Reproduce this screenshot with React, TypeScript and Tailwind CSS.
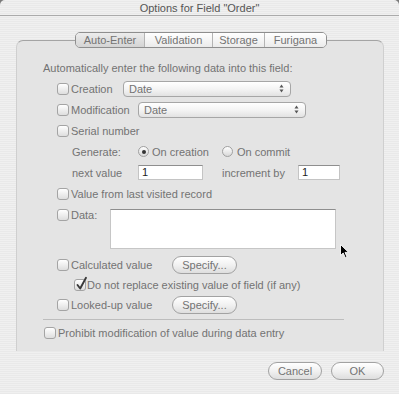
import React from 'react';

const Check: React.FC<{ checked?: boolean }> = ({ checked = false }) => (
  <span className="relative inline-block w-[12px] h-[12px] shrink-0 rounded-[3px] border border-[#a4a4a4] bg-linear-to-b from-[#ffffff] to-[#dedede]">
    {checked && (
      <svg className="absolute left-[1px] -top-[3px] overflow-visible" width="12" height="14" viewBox="0 0 12 14">
        <path d="M1.5 8 L4.2 11.5 L10 0.8" fill="none" stroke="#3a3a3a" strokeWidth="1.9" strokeLinecap="round" strokeLinejoin="round" />
      </svg>
    )}
  </span>
);

const Radio: React.FC<{ selected?: boolean }> = ({ selected = false }) => (
  <span className="inline-flex items-center justify-center w-[11px] h-[11px] shrink-0 rounded-full border border-[#a0a0a0] bg-linear-to-b from-[#ffffff] to-[#d8d8d8]">
    {selected && <span className="block w-[4px] h-[4px] rounded-full bg-[#333333]" />}
  </span>
);

const Popup: React.FC<{ value: string; width: string }> = ({ value, width }) => (
  <div className={`${width} h-[16px] flex items-center justify-between rounded-[4px] border border-[#a6a6a6] bg-linear-to-b from-[#ffffff] via-[#f4f4f4] to-[#e2e2e2] pl-[5px] pr-[6px]`}>
    <span className="leading-[14px]">{value}</span>
    <svg width="5" height="9" viewBox="0 0 5 9">
      <path d="M2.5 0.5 L4.5 3.5 L0.5 3.5 Z" fill="#555" />
      <path d="M0.5 5.5 L4.5 5.5 L2.5 8.5 Z" fill="#555" />
    </svg>
  </div>
);

const Field: React.FC<{ value: string; width: string }> = ({ value, width }) => (
  <div className={`${width} h-[15px] flex items-center bg-white border border-[#c4c4c4] border-t-[#8e8e8e] pl-[3px] text-[#222] leading-[13px]`}>
    {value}
  </div>
);

const Pill: React.FC<{ label: string; width: string }> = ({ label, width }) => (
  <div className={`${width} h-[18px] flex items-center justify-center rounded-full border border-[#a2a2a2] bg-linear-to-b from-[#ffffff] via-[#f1f1f1] to-[#dedede] leading-[14px]`}>
    {label}
  </div>
);

const tabs = [
  { label: 'Auto-Enter', width: 'w-[68px]', active: true },
  { label: 'Validation', width: 'w-[68px]', active: false },
  { label: 'Storage', width: 'w-[52px]', active: false },
  { label: 'Furigana', width: 'flex-1', active: false },
];

export default function App() {
  return (
    <div className="relative w-[399px] h-[394px] overflow-hidden bg-[#7a7a7a] font-['Lucida_Grande','Liberation_Sans',sans-serif] text-[11px] text-[#737373]">
      <div className="h-full flex flex-col rounded-t-[5px] bg-[repeating-linear-gradient(180deg,#f0f0f0_0px,#f0f0f0_1px,#e9e9e9_1px,#e9e9e9_2px)]">
        {/* Title bar */}
        <div className="h-[16px] shrink-0 flex items-center justify-center border-b border-[#ababab] text-[#555] leading-[14px]">
          Options for Field &quot;Order&quot;
        </div>

        {/* Tabs */}
        <div className="relative z-10 mt-[16px] ml-[75px] w-[252px] h-[16px] flex rounded-[5px] border border-[#8e8e8e] overflow-hidden">
          {tabs.map((t, i) => (
            <div
              key={t.label}
              className={`${t.width} h-full flex items-center justify-center leading-[14px] ${i > 0 ? 'border-l border-[#b4b4b4]' : ''} ${
                t.active ? 'bg-linear-to-b from-[#ececec] to-[#d4d4d4]' : 'bg-linear-to-b from-[#ffffff] to-[#ebebeb]'
              }`}
            >
              {t.label}
            </div>
          ))}
        </div>

        {/* Panel */}
        <div className="-mt-[8px] ml-[16px] w-[368px] h-[311px] shrink-0 flex flex-col rounded-t-[7px] border-t border-x border-[#a4a4a4] border-x-[#cfcfcf] bg-[#e4e4e4] pl-[26px] pt-[16px] leading-[14px]">
          <div className="h-[21px] flex items-center">Automatically enter the following data into this field:</div>

          <div className="h-[21px] flex items-center pl-[14px]">
            <span className="w-[66px] flex items-center gap-[2px]"><Check />Creation</span>
            <Popup value="Date" width="w-[168px]" />
          </div>

          <div className="h-[21px] flex items-center pl-[14px]">
            <span className="w-[81px] flex items-center gap-[2px]"><Check />Modification</span>
            <Popup value="Date" width="w-[168px]" />
          </div>

          <div className="h-[21px] flex items-center pl-[14px] gap-[2px]">
            <Check />Serial number
          </div>

          <div className="h-[21px] flex items-center pl-[29px]">
            <span className="w-[66px]">Generate:</span>
            <Radio selected />
            <span className="ml-[3px] w-[70px]">On creation</span>
            <Radio />
            <span className="ml-[4px]">On commit</span>
          </div>

          <div className="h-[21px] flex items-center pl-[29px]">
            <span className="w-[66px]">next value</span>
            <Field value="1" width="w-[65px]" />
            <span className="ml-[19px] w-[76px]">increment by</span>
            <Field value="1" width="w-[42px]" />
          </div>

          <div className="h-[21px] flex items-center pl-[14px] gap-[2px]">
            <Check />Value from last visited record
          </div>

          <div className="h-[51px] flex items-start pl-[14px] pt-[5px]">
            <span className="w-[53px] h-[12px] flex items-center gap-[2px]"><Check />Data:</span>
            <div className="w-[226px] h-[40px] bg-white border border-[#c6c6c6] border-t-[#8e8e8e]" />
          </div>

          <div className="h-[20px] flex items-center pl-[14px]">
            <span className="w-[115px] flex items-center gap-[2px]"><Check />Calculated value</span>
            <Pill label="Specify..." width="w-[65px]" />
          </div>

          <div className="h-[20px] flex items-center pl-[31px] gap-[1px]">
            <Check checked />Do not replace existing value of field (if any)
          </div>

          <div className="h-[20px] flex items-center pl-[14px]">
            <span className="w-[115px] flex items-center gap-[2px]"><Check />Looked-up value</span>
            <Pill label="Specify..." width="w-[65px]" />
          </div>

          <div className="mt-[4px] w-[301px] h-px bg-[#bdbdbd]" />

          <div className="mt-[3px] h-[20px] flex items-center pl-[1px] gap-[2px]">
            <Check />Prohibit modification of value during data entry
          </div>
        </div>

        {/* Buttons */}
        <div className="mt-[11px] flex justify-end gap-[9px] pr-[15px]">
          <Pill label="Cancel" width="w-[54px]" />
          <Pill label="OK" width="w-[53px]" />
        </div>
      </div>

      {/* Mouse pointer */}
      <svg className="absolute left-[340px] top-[244px]" width="10" height="15" viewBox="0 0 10 15">
        <path d="M0.5 0.5 L0.5 11.5 L3.2 9 L5.3 13.8 L7 13 L5 8.4 L8.6 8.4 Z" fill="#000" stroke="#fff" strokeWidth="0.9" strokeLinejoin="round" />
      </svg>
    </div>
  );
}
